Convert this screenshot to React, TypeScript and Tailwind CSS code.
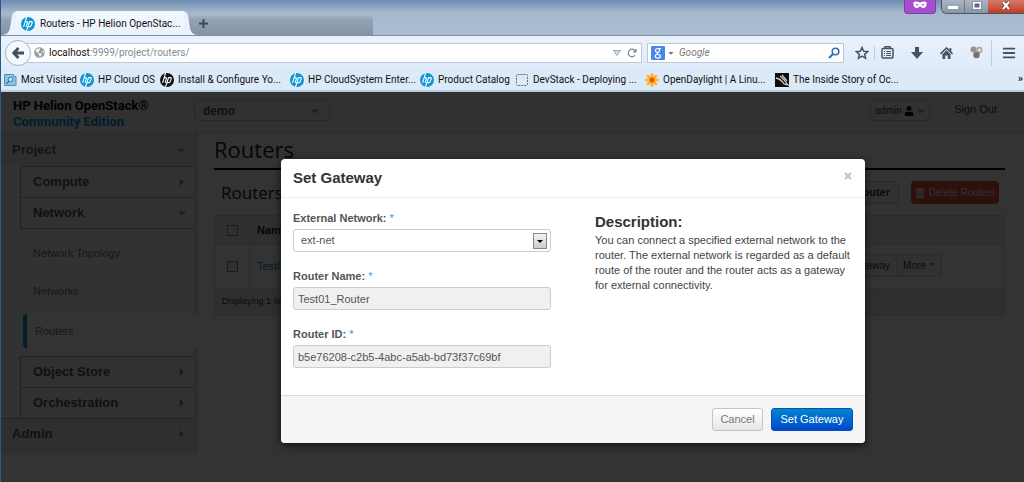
import type { ReactNode } from 'react';
import { FaBars, FaCaretDown, FaCaretRight, FaGlobeAmericas, FaTrashAlt, FaUser } from 'react-icons/fa';
import { FaArrowRotateRight } from 'react-icons/fa6';

function HpLogo({ dark = false }: { dark?: boolean }) {
  return (
    <svg viewBox="0 0 14 14" className="size-[14px] shrink-0" aria-hidden="true">
      <circle cx="7" cy="7" r="7" fill={dark ? '#111' : '#0b96d8'} />
      <g fill="none" stroke="#fff" strokeWidth="1.1">
        <path d="M5.6 0 2.6 9.8M4.2 4.6h1.5q1 0 .7 1L5.1 9.8" />
        <path d="M8.6 4.5 5.5 14M8.6 4.6h1.9q1 0 .7 1l-1 3.1q-.3.9-1.3.9H7" />
      </g>
    </svg>
  );
}

function MostVisitedIcon() {
  return (
    <svg viewBox="0 0 13 14" className="h-[14px] w-[13px] shrink-0" aria-hidden="true">
      <path d="M.5 1.5h9v2h2.5v9H.5z" fill="#8fc3e4" stroke="#4b93c0" />
      <circle cx="6.500" cy="6.500" r="2.300" fill="#c5e2f3" stroke="#33789f" />
      <path d="m4.800 8.300-2.300 2.400" stroke="#33789f" strokeWidth="1.500" />
    </svg>
  );
}

function DashedIcon() {
  return (
    <svg viewBox="0 0 14 14" className="size-[14px] shrink-0" aria-hidden="true">
      <rect x="1.500" y="1.500" width="11" height="11" rx="1" fill="none" stroke="#5f6d7b" strokeDasharray="2 1" />
    </svg>
  );
}

function FlowerIcon() {
  return (
    <svg viewBox="0 0 14 14" className="size-[14px] shrink-0" aria-hidden="true">
      <g stroke="#fbb117" strokeWidth="2.600" strokeLinecap="round">
        <path d="M7 1.500v11M1.500 7h11M3.100 3.100l7.800 7.800M10.900 3.100l-7.800 7.800" />
      </g>
      <circle cx="7" cy="7" r="2.400" fill="#ee4b1c" />
    </svg>
  );
}

function StoryIcon() {
  return (
    <svg viewBox="0 0 14 14" className="size-[14px] shrink-0" aria-hidden="true">
      <path d="M0 0h14v14H0z" fill="#0c0c0c" />
      <path d="M1 5q5 1 8 6l4 1Q9 6 5 3M7 2l5 6" fill="none" stroke="#c9c9c9" strokeWidth="1.300" />
    </svg>
  );
}

const bookmarks: { label: string; icon: ReactNode; width: string }[] = [
  { label: 'Most Visited', icon: <MostVisitedIcon />, width: 'w-[76px]' },
  { label: 'HP Cloud OS', icon: <HpLogo />, width: 'w-[80px]' },
  { label: 'Install & Configure Yo...', icon: <HpLogo dark />, width: 'w-[130px]' },
  { label: 'HP CloudSystem Enter...', icon: <HpLogo />, width: 'w-[130px]' },
  { label: 'Product Catalog', icon: <HpLogo />, width: 'w-[95px]' },
  { label: 'DevStack - Deploying ...', icon: <DashedIcon />, width: 'w-[130px]' },
  { label: 'OpenDaylight | A Linu...', icon: <FlowerIcon />, width: 'w-[130px]' },
  { label: 'The Inside Story of Oc...', icon: <StoryIcon />, width: 'w-[130px]' },
];

function TitleBar() {
  return (
    <div className="flex h-[35px] items-end justify-between bg-linear-to-b from-[#6c8db2] via-[#a5b8cc] via-35% to-[#aabdd1]">
      <div className="flex h-[24px] w-[372px] items-center bg-linear-to-b from-transparent from-15% via-[#93a3b3] via-35% to-[#8493a2]">
        <div className="flex h-[24px] items-stretch">
          <svg viewBox="0 0 15 24" className="h-[24px] w-[15px]" aria-hidden="true">
            <path d="M0 24C9 24 9 18 10 10Q11 .5 15 .5V24z" fill="#eaf3fc" />
          </svg>
          <div className="flex w-[168px] items-center gap-[5px] border-t border-[#e8f1fa] bg-linear-to-b from-[#f5f9fe] to-[#e7f1fb] pl-[5px]">
            <HpLogo />
            <span className="whitespace-nowrap text-[10px] text-[#111]">Routers - HP Helion OpenStac...</span>
          </div>
          <svg viewBox="0 0 15 24" className="h-[24px] w-[15px]" aria-hidden="true">
            <path d="M15 24C6 24 6 18 5 10Q4 .5 0 .5V24z" fill="#eaf3fc" />
          </svg>
        </div>
        <button aria-label="New tab" className="flex size-[9px]">
          <svg viewBox="0 0 9 9" className="size-[9px]"><path d="M4.500 0v9M0 4.500h9" stroke="#3e4a57" strokeWidth="2" /></svg>
        </button>
      </div>
      <div className="flex items-start gap-[5px] self-start">
        <span className="flex h-[14px] w-[32px] items-start justify-center rounded-b-sm border border-t-0 border-[#8139aa] bg-[#a64fce]">
          <svg viewBox="0 0 14 8" className="mt-[1px] h-[8px] w-[14px]" aria-hidden="true">
            <path d="M.5 1Q4-.2 7 1.800 10-.2 13.500 1q.5 5.500-3 6-2.300.2-3.500-2-1.200 2.200-3.500 2Q0 6.500.5 1z" fill="#fff" />
            <path d="M2.500 3.500q1.500-1.300 3.200.4-1.700 1.300-3.200-.4M11.500 3.500Q10 2.200 8.300 3.900q1.700 1.300 3.200-.4" fill="#a64fce" />
          </svg>
        </span>
        <div className="flex h-[14px] overflow-hidden rounded-bl-md border-b border-l border-[#475565]">
          <button aria-label="Minimize" className="flex w-[23px] justify-center border-r border-[#6a7889] bg-linear-to-b from-[#aab6c4] to-[#8796a8] pt-[6px]">
            <span className="h-[3px] w-[10px] bg-white" />
          </button>
          <button aria-label="Maximize" className="flex w-[23px] justify-center bg-linear-to-b from-[#aab6c4] to-[#8796a8] pt-[1px]">
            <svg viewBox="0 0 10 9" className="h-[9px] w-[10px]"><path d="M1.500 1.500h7v6h-7z" fill="#667" stroke="#fff" strokeWidth="2" /><path d="M.5.5h9v8h-9z" fill="none" stroke="#596575" strokeWidth=".6" /></svg>
          </button>
          <button aria-label="Close window" className="flex w-[36px] justify-center bg-linear-to-b from-[#d37a68] to-[#c03a22] pt-[1px]">
            <svg viewBox="0 0 10 9" className="h-[9px] w-[10px]"><path d="m2 1 6 7M8 1 2 8" stroke="#5b3030" strokeWidth="3.600" /><path d="m2 1 6 7M8 1 2 8" stroke="#fff" strokeWidth="2.200" /></svg>
          </button>
        </div>
      </div>
    </div>
  );
}

function NavBar() {
  return (
    <div className="flex h-[34px] items-center border-t border-[#7f8fa0] bg-linear-to-b from-[#e9f2fc] to-[#dfebf9] pl-[4px] pr-[8px]">
      <button aria-label="Back" className="z-10 flex size-[26px] shrink-0 items-center justify-center rounded-full border border-[#a3b4c6] bg-[#f5f9fd] text-[#43505c]">
        <svg viewBox="0 0 12 12" className="size-[12px]"><path d="M6.500 1 1.700 6l4.800 5M2 6h10" fill="none" stroke="currentColor" strokeWidth="2.800" /></svg>
      </button>
      <div className="-ml-[5px] flex h-[20px] grow items-center border border-[#b9c9da] bg-white pl-[7px] pr-[4px]">
        <FaGlobeAmericas className="size-[11px] text-[#9a9fa4]" />
        <div className="grow pl-[4px] text-[10px] text-[#858a90]"><span className="text-[#111]">localhost</span>:9999/project/routers/</div>
        <svg viewBox="0 0 8 6" className="h-[6px] w-[8px]" aria-hidden="true"><path d="M.5.5h7L4 5.500z" fill="#d4dae1" stroke="#9ba8b5" /></svg>
        <button aria-label="Reload" className="ml-[6px] text-[10px] text-[#7b8793]"><FaArrowRotateRight /></button>
      </div>
      <div className="ml-[5px] flex h-[20px] w-[197px] items-center border border-[#b9c9da] bg-white px-[3px]">
        <svg viewBox="0 0 14 14" className="size-[14px] shrink-0" aria-hidden="true">
          <rect width="14" height="14" rx="1" fill="#4886ee" />
          <g fill="none" stroke="#fff" strokeWidth="1.200"><circle cx="6.500" cy="4.500" r="2" /><path d="M8 2.500h2M7 6.500q-2 1 .3 2" /><ellipse cx="6.800" cy="10.300" rx="2.600" ry="1.800" /></g>
        </svg>
        <FaCaretDown className="mx-[2px] size-[8px] shrink-0 text-[#6a737c]" />
        <input aria-label="Search" placeholder="Google" className="w-0 grow bg-transparent pl-[2px] text-[10px] italic outline-none placeholder:text-[#777]" />
        <svg viewBox="0 0 12 12" className="size-[12px] shrink-0" aria-hidden="true"><circle cx="7.500" cy="4.500" r="3.300" fill="none" stroke="#2f74b5" strokeWidth="1.600" /><path d="M5 7 1 11" stroke="#2f74b5" strokeWidth="2.200" /></svg>
      </div>
      <div className="flex items-center pl-[11px] text-[#46525e]">
        <svg viewBox="0 0 14 14" className="size-[14px]" aria-hidden="true"><path d="m7 1.500 1.700 3.700 4 .4-3 2.700.9 4L7 10.200l-3.600 2.100.9-4-3-2.700 4-.4z" fill="none" stroke="currentColor" strokeWidth="1.500" /></svg>
        <span className="ml-[5px] h-[14px] w-px bg-[#c1cedc]" />
        <svg viewBox="0 0 13 13" className="ml-[6px] size-[13px]" aria-hidden="true">
          <path d="M4 2V.8h5V2" fill="none" stroke="currentColor" strokeWidth="1.500" />
          <rect x="1" y="2.500" width="11" height="9.500" rx="1" fill="none" stroke="currentColor" strokeWidth="1.500" />
          <path d="M3 5.500h1M5.200 5.500H10M3 7.500h1M5.200 7.500H10M3 9.500h1M5.200 9.500H10" stroke="currentColor" strokeWidth="1.200" />
        </svg>
        <svg viewBox="0 0 12 12" className="ml-[17px] size-[12px]" aria-hidden="true"><path d="M4 0h4v5h4l-6 7-6-7h4z" fill="currentColor" /></svg>
        <svg viewBox="0 0 13 12" className="ml-[17px] h-[12px] w-[13px]" aria-hidden="true">
          <path d="M.5 7 6.500 1l6 6" fill="none" stroke="currentColor" strokeWidth="1.600" />
          <path d="M9.500 1h1.800v4L9.500 3.500zM2.500 7.300l4-4 4 4V12H7.800V8.500H5.200V12H2.500z" fill="currentColor" />
        </svg>
        <svg viewBox="0 0 13 13" className="ml-[17px] size-[13px]" aria-hidden="true"><circle cx="3.500" cy="3.500" r="3" fill="#969391" /><circle cx="9.300" cy="4" r="3.200" fill="#aaa6a2" /><circle cx="6.500" cy="9" r="3.200" fill="#77716c" /><circle cx="9.500" cy="4" r="1.600" fill="#e6e5e3" /></svg>
        <span className="ml-[8px] h-[26px] w-px bg-[#c1cedc]" />
        <FaBars className="ml-[10px] size-[14px]" />
      </div>
    </div>
  );
}

function BookmarkBar() {
  return (
    <nav aria-label="Bookmarks" className="flex h-[23px] items-center border-b-2 border-[#b9cde0] bg-[#dce9f7] pl-[3px]">
      {bookmarks.map((b) => (
        <a key={b.label} href="#" className={`${b.width} flex shrink-0 items-center gap-[4px] whitespace-nowrap text-[10px] text-[#111]`}>
          {b.icon}
          {b.label}
        </a>
      ))}
      <span className="ml-auto pr-[1px] text-[11px]">»</span>
    </nav>
  );
}

function GroupRow({ label, open = false }: { label: string; open?: boolean }) {
  return (
    <button className="flex h-[31px] w-full items-center justify-between border-t border-l border-[#aaa] bg-[#f5f5f5] pl-[12px] pr-[6px] text-[13px] font-bold text-[#555]">
      {label}
      {open ? <FaCaretDown className="size-[12px] text-[#888]" /> : <FaCaretRight className="size-[12px] text-[#888]" />}
    </button>
  );
}

function Sidebar() {
  return (
    <aside className="w-[197px] shrink-0 self-start rounded-br-md border-r-4 border-[#e0e0e0] bg-[#f8f8f8]">
      <button className="flex h-[33px] w-full items-center justify-between bg-[#ececec] pl-[11px] pr-[7px] text-[13px] font-bold text-[#666]">
        Project <FaCaretDown className="size-[12px] text-[#999]" />
      </button>
      <div className="pl-[19px]">
        <GroupRow label="Compute" />
        <GroupRow label="Network" open />
        <div className="border-t border-[#aaa] text-[11px] text-[#777]">
          <a href="#" className="block pl-[13px] pt-[5px] leading-[38px]">Network Topology</a>
          <a href="#" className="block pl-[13px] leading-[38px]">Networks</a>
          <a href="#" className="-mr-[4px] mt-[4px] mb-[8px] ml-[3px] block rounded-l-sm border-l-4 border-[#0096d6] bg-white pl-[8px] leading-[34px]">Routers</a>
        </div>
        <GroupRow label="Object Store" />
        <GroupRow label="Orchestration" />
      </div>
      <button className="flex h-[36px] w-full items-start justify-between rounded-br-md border-t border-[#aaa] bg-[#ececec] pt-[5px] pl-[11px] pr-[6px] text-[13px] font-bold leading-[20px] text-[#555]">
        Admin <FaCaretRight className="mt-[4px] size-[12px] text-[#888]" />
      </button>
    </aside>
  );
}

function Dashboard() {
  return (
    <div className="bg-white font-['Liberation_Sans',Arial,sans-serif]">
      <header className="flex h-[41px] items-start border-b border-[#d0d0d0] bg-[#f4f4f4] pl-[12px] pr-[27px]">
        <div className="w-[181px] pt-[6px] font-['Roboto',sans-serif] text-[13px] font-bold leading-[16px] whitespace-nowrap">
          <div className="text-black">HP Helion OpenStack®</div>
          <div className="text-[#0096d6]">Community Edition</div>
        </div>
        <button className="mt-[8px] flex h-[21px] w-[136px] items-center justify-between rounded-sm border border-[#ccc] bg-[#f4f4f4] px-[8px] text-[12px] font-bold text-[#555]">
          demo <FaCaretDown className="size-[12px] text-[#999]" />
        </button>
        <button className="mt-[8px] ml-auto flex h-[21px] w-[60px] items-center justify-center gap-[2px] rounded-sm border border-[#ccc] text-[10px] text-[#444]">
          admin <FaUser className="size-[10px] text-black" /> <FaCaretDown className="size-[10px] text-[#999]" />
        </button>
        <a href="#" className="ml-[24px] mt-[9px] text-[11px] leading-[16px] text-[#444]">Sign Out</a>
      </header>
      <div className="flex">
        <Sidebar />
        <main className="grow pl-[16px] pr-[19px]">
          <h1 className="h-[37px] border-b-2 border-black font-['Open_Sans',sans-serif] text-[22px] leading-[32px] text-[#222]">Routers</h1>
          <div className="flex h-[45px] items-center pl-[7px] pr-[6px]">
            <h2 className="font-['Open_Sans',sans-serif] text-[17px] text-[#222]">Routers</h2>
            <button className="ml-auto h-[23px] rounded-sm border border-[#ccc] bg-[#f5f5f5] px-[8px] text-[11px] font-bold text-[#333]">+ Create Router</button>
            <button className="ml-[12px] flex h-[23px] w-[88px] items-center justify-center gap-[4px] rounded-sm bg-[#da4f49] text-[10px] whitespace-nowrap text-[#eee]">
              <FaTrashAlt className="size-[10px]" />Delete Routers
            </button>
          </div>
          <table className="w-full border-collapse border border-[#ddd] text-left text-[11px] text-[#444]">
            <thead>
              <tr className="h-[29px] border-b border-[#ddd] bg-[#f1f1f1]">
                <th className="w-[35px] border-r border-[#ddd]"><input type="checkbox" aria-label="Select all routers" className="mx-auto block size-[11px] appearance-none border border-[#888] bg-[#eee]" /></th>
                <th className="pl-[7px] text-[#222]">Name</th>
                <th className="w-[150px]" aria-label="Actions" />
              </tr>
            </thead>
            <tbody>
              <tr className="h-[44px] border-b border-[#ddd]">
                <td className="border-r border-[#ddd]"><input type="checkbox" aria-label="Select Test01_Router" className="mx-auto block size-[11px] appearance-none border border-[#888] bg-[#eee]" /></td>
                <td className="pl-[7px]"><a href="#" className="text-[#0088cc]">Test01_Router</a></td>
                <td className="pb-[3px]">
                  <div className="flex justify-end pr-[62px] text-[10px]">
                    <button className="h-[23px] rounded-l-sm border border-[#ccc] bg-[#f2f2f2] px-[7px] whitespace-nowrap">Set Gateway</button>
                    <button className="flex h-[23px] w-[44px] shrink-0 items-center justify-center gap-[2px] rounded-r-sm border border-l-0 border-[#ccc] bg-[#f2f2f2]">More <FaCaretDown className="mb-[3px] size-[8px] text-[#888]" /></button>
                  </div>
                </td>
              </tr>
            </tbody>
            <tfoot>
              <tr className="h-[27px] bg-[#ececec]"><td colSpan={3} className="pl-[7px] text-[9px] text-[#333]">Displaying 1 item</td></tr>
            </tfoot>
          </table>
        </main>
      </div>
    </div>
  );
}

function Required() {
  return <span className="font-normal text-[#3a94d8]">*</span>;
}

function GatewayDialog() {
  const label = 'mb-[3px] block text-[11px] font-bold leading-[15px] text-[#555]';
  const field = 'mb-[17px] block h-[23px] w-full rounded-[3px] border border-[#ccc] bg-[#f0f0f0] px-[4px] text-[11px] text-[#555]';
  return (
    <div role="dialog" aria-modal="true" aria-labelledby="dialog-title" className="w-[584px] overflow-hidden rounded-[4px] bg-white font-['Liberation_Sans',Arial,sans-serif] shadow-[0_2px_8px_rgba(0,0,0,0.7)]">
      <div className="flex h-[39px] items-center justify-between border-b border-[#eee] pl-[12px] pr-[13px]">
        <h3 id="dialog-title" className="text-[15px] font-bold text-[#333]">Set Gateway</h3>
        <button aria-label="Close" className="mb-[4px] flex size-[8px]">
          <svg viewBox="0 0 8 8" className="size-[8px]"><path d="m1 1 6 6M7 1 1 7" stroke="#c3c3c3" strokeWidth="2.400" /></svg>
        </button>
      </div>
      <form onSubmit={(e) => e.preventDefault()}>
        <div className="flex justify-between pl-[12px] pr-[10px] pt-[13px]">
          <div className="w-[258px]">
            <label htmlFor="network" className={label}>External Network: <Required /></label>
            <div className="relative mb-[17px]">
              <select id="network" className="block h-[23px] w-full appearance-none rounded-[3px] border border-[#ccc] bg-white pl-[7px] text-[11px] text-[#555]">
                <option>ext-net</option>
              </select>
              <span className="pointer-events-none absolute top-[4px] right-[4px] flex h-[16px] w-[14px] items-center justify-center border border-[#888] bg-linear-to-b from-[#f5f5f5] to-[#ccc]">
                <svg viewBox="0 0 6 3" className="h-[3px] w-[6px]" aria-hidden="true"><path d="M0 0h6L3 3z" fill="#000" /></svg>
              </span>
            </div>
            <label htmlFor="router-name" className={label}>Router Name: <Required /></label>
            <input id="router-name" readOnly defaultValue="Test01_Router" className={field} />
            <label htmlFor="router-id" className={label}>Router ID: <Required /></label>
            <input id="router-id" readOnly defaultValue="b5e76208-c2b5-4abc-a5ab-bd73f37c69bf" className={field} />
          </div>
          <div className="w-[260px]">
            <h4 className="text-[15px] font-bold leading-[22px] text-[#333]">Description:</h4>
            <p className="text-[11px] leading-[15px] text-[#444]">You can connect a specified external network to the router. The external network is regarded as a default route of the router and the router acts as a gateway for external connectivity.</p>
          </div>
        </div>
        <div className="mt-[10px] flex h-[48px] items-start justify-end gap-[8px] border-t border-[#ddd] bg-[#f5f5f5] px-[12px] pt-[12px] text-[11px]">
          <button type="button" className="h-[23px] w-[51px] rounded-[3px] border border-[#c5c5c5] bg-linear-to-b from-white to-[#e6e6e6] text-[#777]">Cancel</button>
          <button type="submit" className="h-[23px] w-[82px] rounded-[3px] border border-[#0a4cc0] bg-linear-to-b from-[#0684cc] to-[#0446cc] text-white">Set Gateway</button>
        </div>
      </form>
    </div>
  );
}

export default function App() {
  return (
    <div className="flex min-h-screen flex-col border-l border-[#33587f] bg-white font-['Roboto','Noto_Sans',sans-serif]">
      <TitleBar />
      <NavBar />
      <BookmarkBar />
      <div className="relative grow">
        <Dashboard />
        <div className="absolute inset-0 flex items-start justify-center bg-black/80 pt-[67px] pl-[121px]">
          <GatewayDialog />
        </div>
      </div>
    </div>
  );
}
